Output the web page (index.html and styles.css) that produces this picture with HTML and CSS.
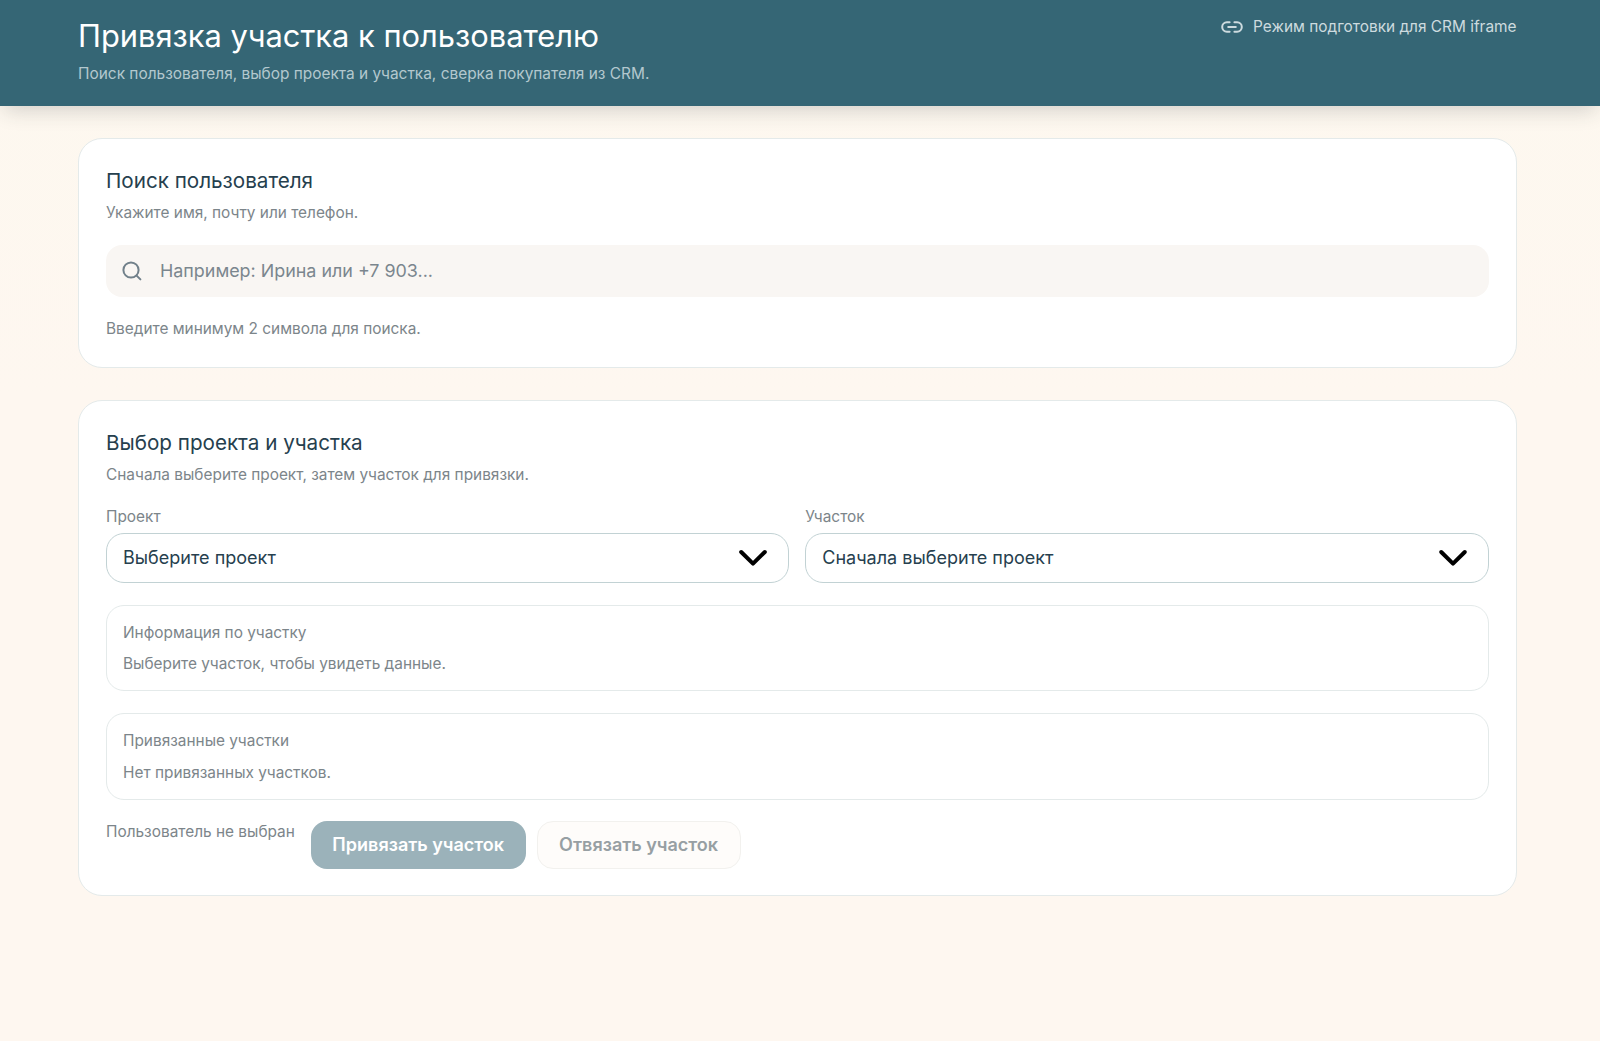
FILE: index.html
```
<!DOCTYPE html>
<html lang="ru">
<head>
    <meta charset="UTF-8">
    <meta name="viewport" content="width=device-width, initial-scale=1.0">
    <title>Привязка участка к пользователю</title>
    <link rel="stylesheet" href="styles.css">
</head>
<body>
    <header class="header">
        <div>
            <h1 class="header-title">Привязка участка к пользователю</h1>
            <p class="header-subtitle">Поиск пользователя, выбор проекта и участка, сверка покупателя из CRM.</p>
        </div>
        <div class="header-mode">
            <svg class="mode-icon" viewBox="0 0 22 22" fill="none" stroke="currentColor" stroke-width="2" stroke-linecap="round">
                <path d="M8.6 6.3H5.9a4.7 4.7 0 0 0 0 9.4h2.7M13.4 6.3h2.7a4.7 4.7 0 0 1 0 9.4h-2.7M7.2 11h7.6"/>
            </svg>
            <span>Режим подготовки для CRM iframe</span>
        </div>
    </header>

    <main class="main">
        <!-- User search -->
        <section class="card">
            <h2 class="card-title">Поиск пользователя</h2>
            <p class="muted">Укажите имя, почту или телефон.</p>
            <label class="search">
                <svg class="search-icon" viewBox="0 0 20 20" fill="none" stroke="currentColor" stroke-width="2" stroke-linecap="round">
                    <circle cx="9" cy="9" r="7.6"/>
                    <path d="M14.6 14.6l3.8 3.8"/>
                </svg>
                <input class="search-input" type="text" placeholder="Например: Ирина или +7 903...">
            </label>
            <p class="muted">Введите минимум 2 символа для поиска.</p>
        </section>

        <!-- Project and plot -->
        <section class="card">
            <h2 class="card-title">Выбор проекта и участка</h2>
            <p class="muted">Сначала выберите проект, затем участок для привязки.</p>

            <div class="fields">
                <div class="field">
                    <span class="muted">Проект</span>
                    <button class="select" type="button">
                        Выберите проект
                        <svg class="chevron" viewBox="0 0 28 16" fill="none" stroke="currentColor" stroke-width="4" stroke-linecap="round" stroke-linejoin="round">
                            <path d="M2.2 2L14 13.6 25.8 2"/>
                        </svg>
                    </button>
                </div>
                <div class="field">
                    <span class="muted">Участок</span>
                    <button class="select" type="button">
                        Сначала выберите проект
                        <svg class="chevron" viewBox="0 0 28 16" fill="none" stroke="currentColor" stroke-width="4" stroke-linecap="round" stroke-linejoin="round">
                            <path d="M2.2 2L14 13.6 25.8 2"/>
                        </svg>
                    </button>
                </div>
            </div>

            <div class="info-box">
                <p class="muted">Информация по участку</p>
                <p class="muted">Выберите участок, чтобы увидеть данные.</p>
            </div>

            <div class="info-box">
                <p class="muted">Привязанные участки</p>
                <p class="muted">Нет привязанных участков.</p>
            </div>

            <div class="actions">
                <span class="muted">Пользователь не выбран</span>
                <div class="buttons">
                    <button class="btn btn-primary" disabled>Привязать участок</button>
                    <button class="btn btn-outline" disabled>Отвязать участок</button>
                </div>
            </div>
        </section>
    </main>
</body>
</html>
```
FILE: styles.css
```
:root {
    --header-color: #356675;
    --text-color: #26404e;
    --muted-color: #7c858a;
    --card-border: #e4eaea;
    --select-border: #c2d2d4;
    --input-background: #f9f6f3;
}

* {
    box-sizing: border-box;
}

body {
    margin: 0;
    min-height: 100vh;
    font-family: Inter, "Noto Sans", sans-serif;
    font-size: 15.4px;
    line-height: 23px;
    color: var(--text-color);
    background: linear-gradient(#fdf8ef, #fef7f0 400px);
}

h1, h2, p {
    margin: 0;
    font-weight: 400;
}

button, input {
    font-family: inherit;
    font-size: 18.05px;
    line-height: 24px;
}

.header {
    display: flex;
    justify-content: space-between;
    align-items: flex-start;
    height: 106px;
    padding: 15px 83.5px 0 78px;
    background-color: var(--header-color);
    box-shadow: 0 8px 20px -4px rgba(40, 50, 50, 0.2);
}

.header-title {
    font-size: 30.85px;
    line-height: 42px;
    color: #fff;
}

.header-subtitle {
    margin-top: 4.5px;
    font-size: 15.43px;
    color: #b3c8ce;
}

.header-mode {
    display: flex;
    align-items: center;
    gap: 10.5px;
    color: #cddbdf;
}

.mode-icon {
    width: 22px;
    height: 22px;
}

.main {
    display: flex;
    flex-direction: column;
    gap: 32.5px;
    padding: 32px 83.5px 0 78px;
}

.card {
    padding: 27px 27px 26.5px;
    background-color: #fff;
    border: 1px solid var(--card-border);
    border-radius: 24px;
}

.card-title {
    margin-bottom: 5.5px;
    font-size: 20.65px;
    line-height: 29px;
}

.muted {
    color: var(--muted-color);
}

.search {
    display: flex;
    align-items: center;
    gap: 18px;
    height: 52.5px;
    margin: 21px 0 20px;
    padding: 0 16px;
    background-color: var(--input-background);
    border-radius: 16px;
    color: #71808a;
}

.search-icon {
    width: 20px;
    height: 20px;
}

.search-input {
    flex: 1;
    padding: 0;
    border: none;
    outline: none;
    background: none;
    font-size: 17.9px;
}

.search-input::placeholder {
    color: #7b868e;
}

.fields {
    display: flex;
    gap: 16px;
    margin-top: 19.5px;
}

.field {
    flex: 1;
    display: flex;
    flex-direction: column;
    gap: 4.5px;
}

.select {
    display: flex;
    justify-content: space-between;
    align-items: center;
    height: 50px;
    padding: 0 21px 0 16px;
    border: 1px solid var(--select-border);
    border-radius: 18px;
    background-color: #fff;
    color: var(--text-color);
    text-align: left;
    cursor: pointer;
}

.chevron {
    width: 28px;
    height: 16px;
    color: #000;
    overflow: visible;
}

.info-box {
    display: flex;
    flex-direction: column;
    gap: 8.5px;
    margin-top: 22px;
    padding: 15px 16px;
    border: 1px solid var(--card-border);
    border-radius: 18px;
}

.actions {
    display: flex;
    align-items: flex-start;
    gap: 16px;
    margin-top: 21px;
}

.actions .muted {
    line-height: 22px;
}

.buttons {
    display: flex;
    gap: 11px;
}

.btn {
    height: 48px;
    padding: 0 20.5px;
    border: 1px solid transparent;
    border-radius: 16px;
    font-weight: 600;
}

.btn-primary {
    background-color: #9bb2ba;
    color: #fff;
}

.btn-outline {
    padding: 0 21.5px;
    background-color: #fefcfa;
    border-color: #f2f1ee;
    color: #979fa3;
}
```
